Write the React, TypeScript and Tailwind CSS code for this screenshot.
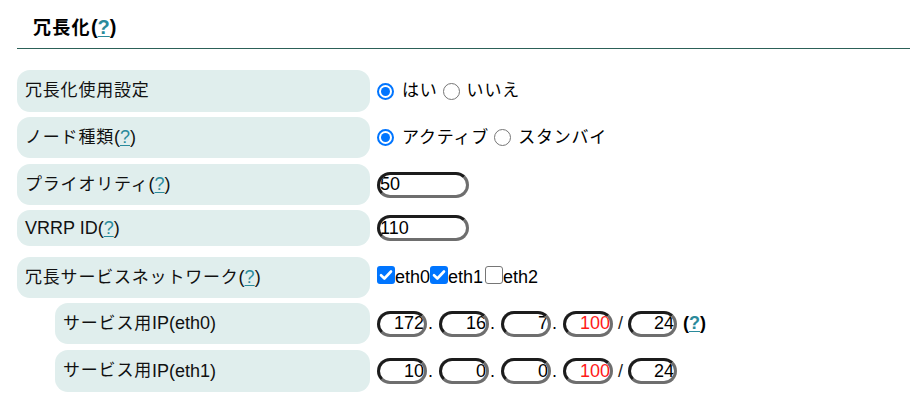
import React from "react";

const FONT = '"Liberation Sans", Arial, "Noto Sans CJK JP", sans-serif';

function J({ children }: { children: React.ReactNode }) {
  return <span className="text-[17px] tracking-[0.8px]">{children}</span>;
}

function Help({ bold = false }: { bold?: boolean }) {
  return (
    <span className={bold ? "font-bold" : ""}>
      (<a className="text-[#2a8a9b] underline underline-offset-2 decoration-[1px]">?</a>)
    </span>
  );
}

function Label({ children, sub = false }: { children: React.ReactNode; sub?: boolean }) {
  return (
    <div
      className={`flex items-center h-full bg-[#e0eeed] rounded-[13px] pl-[8px] text-[18px] text-[#111] ${
        sub ? "ml-[55px] w-[315px]" : "ml-[17px] w-[353px]"
      }`}
    >
      {children}
    </div>
  );
}

function Radio({ checked = false }: { checked?: boolean }) {
  return checked ? (
    <span className="inline-flex items-center justify-center w-[17px] h-[17px] rounded-full border-[2px] border-[#0075ff] bg-white shrink-0">
      <span className="w-[9px] h-[9px] rounded-full bg-[#0075ff]" />
    </span>
  ) : (
    <span className="inline-block w-[17px] h-[17px] rounded-full border-[1.5px] border-[#767676] bg-white shrink-0" />
  );
}

function Check({ checked = false }: { checked?: boolean }) {
  return checked ? (
    <span className="inline-flex items-center justify-center w-[18px] h-[18px] rounded-[3px] bg-[#0075ff] shrink-0">
      <svg width="14" height="14" viewBox="0 0 14 14">
        <path d="M2 7.2 L5.4 10.5 L12 3.5" fill="none" stroke="white" strokeWidth="2.6" strokeLinecap="round" strokeLinejoin="round" />
      </svg>
    </span>
  ) : (
    <span className="inline-block w-[18px] h-[18px] rounded-[3px] border-[1.5px] border-[#767676] bg-white shrink-0" />
  );
}

function TextBox({ value, w, right = false, red = false }: { value: string; w: string; right?: boolean; red?: boolean }) {
  return (
    <input
      readOnly
      value={value}
      className={`${w} h-[26px] rounded-full border-[3px] border-t-[#1c1c1c] border-l-[#1c1c1c] border-b-[#6e6e6e] border-r-[#6e6e6e] bg-white px-0 text-[18px] leading-none outline-none ${
        right ? "text-right" : "text-left"
      } ${red ? "text-[#ff1a1a]" : "text-black"}`}
      style={{ fontFamily: FONT }}
    />
  );
}

function Dot() {
  return <span className="ml-[1px] mr-[6px] text-[18px]">.</span>;
}

function IpRow({ parts, help }: { parts: string[]; help?: boolean }) {
  return (
    <div className="flex items-center text-[18px] text-black">
      <TextBox value={parts[0]} w="w-[50px]" right />
      <Dot />
      <TextBox value={parts[1]} w="w-[50px]" right />
      <Dot />
      <TextBox value={parts[2]} w="w-[50px]" right />
      <Dot />
      <TextBox value={parts[3]} w="w-[50px]" right red />
      <span className="mx-[5px] text-[#222]">/</span>
      <TextBox value={parts[4]} w="w-[49px]" right />
      {help && (
        <span className="ml-[6px]">
          <Help bold />
        </span>
      )}
    </div>
  );
}

export default function App() {
  return (
    <div className="w-[910px] h-[419px] bg-white text-black" style={{ fontFamily: FONT }}>
      <div className="pt-[13px] pl-[33px] h-[48px] text-[20px] font-bold leading-[28px]">
        <span className="text-[18px] tracking-[1.3px]">冗長化</span>
        <Help />
      </div>
      <div className="ml-[17px] h-[1px] bg-[#2c6158]" />

      <div className="flex flex-col">
        <div className="flex h-[42px] mt-[21px]">
          <Label>
            <J>冗長化使用設定</J>
          </Label>
          <div className="flex items-center pl-[7px] text-[18px]">
            <Radio checked />
            <span className="w-[8px]" />
            <J>はい</J>
            <span className="w-[5px]" />
            <Radio />
            <span className="w-[7px]" />
            <J>いいえ</J>
          </div>
        </div>

        <div className="flex h-[41px] mt-[5px]">
          <Label>
            <J>ノード種類</J>
            <Help />
          </Label>
          <div className="flex items-center pl-[7px] text-[18px]">
            <Radio checked />
            <span className="w-[8px]" />
            <J>アクティブ</J>
            <span className="w-[5px]" />
            <Radio />
            <span className="w-[7px]" />
            <J>スタンバイ</J>
          </div>
        </div>

        <div className="flex h-[41px] mt-[6px]">
          <Label>
            <J>プライオリティ</J>
            <Help />
          </Label>
          <div className="flex items-center pl-[7px]">
            <TextBox value="50" w="w-[92px]" />
          </div>
        </div>

        <div className="flex h-[36px] mt-[5px]">
          <Label>
            VRRP ID
            <Help />
          </Label>
          <div className="flex items-center pl-[7px]">
            <TextBox value="110" w="w-[92px]" />
          </div>
        </div>

        <div className="flex h-[41px] mt-[11px]">
          <Label>
            <J>冗長サービスネットワーク</J>
            <Help />
          </Label>
          <div className="flex items-center pl-[7px] text-[18px]">
            <span className="relative top-[-3px] flex"><Check checked /></span>
            <span>eth0</span>
            <span className="relative top-[-3px] flex"><Check checked /></span>
            <span>eth1</span>
            <span className="relative top-[-3px] flex ml-[2px]"><Check /></span>
            <span>eth2</span>
          </div>
        </div>

        <div className="flex h-[41px] mt-[5px]">
          <Label sub>
            <J>サービス用</J>IP(eth0)
          </Label>
          <div className="flex items-center pl-[7px]">
            <IpRow parts={["172", "16", "7", "100", "24"]} help />
          </div>
        </div>

        <div className="flex h-[42px] mt-[6px]">
          <Label sub>
            <J>サービス用</J>IP(eth1)
          </Label>
          <div className="flex items-center pl-[7px]">
            <IpRow parts={["10", "0", "0", "100", "24"]} />
          </div>
        </div>
      </div>
    </div>
  );
}
